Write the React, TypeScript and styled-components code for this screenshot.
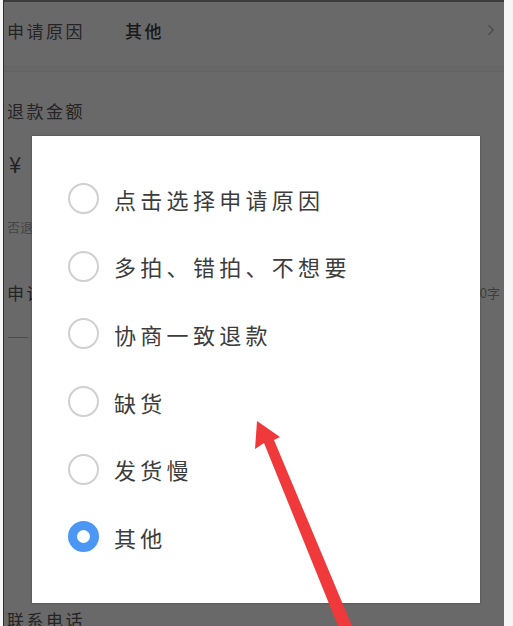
import styled, { createGlobalStyle } from "styled-components";
import { ChevronRight } from "lucide-react";

const reasons = [
  "点击选择申请原因",
  "多拍、错拍、不想要",
  "协商一致退款",
  "缺货",
  "发货慢",
  "其他",
];
const selected = "其他";

const GlobalStyle = createGlobalStyle`
  html, body {
    margin: 0;
    padding: 0;
    background: #fff;
  }
  body {
    font-family: "Noto Sans CJK SC", "Noto Sans", sans-serif;
  }
`;

const Frame = styled.div`
  position: relative;
  width: 513px;
  height: 626px;
  box-sizing: border-box;
  padding: 0 9px 0 3px;
  background: #f6f6f6;
  overflow: hidden;
`;

const Screen = styled.div`
  position: relative;
  height: 100%;
  box-sizing: border-box;
  border-left: 1px solid #2e2e2e;
  border-top: 2px solid #3c3c3c;
  background: #fff;
  overflow: hidden;
`;

const Form = styled.div`
  display: flex;
  flex-direction: column;
  color: #575757;
`;

const Row = styled.div<{ $h: number; $align?: string; $pb?: number }>`
  display: flex;
  flex-shrink: 0;
  align-items: ${(p) => p.$align ?? "center"};
  height: ${(p) => p.$h}px;
  padding: 0 4px ${(p) => p.$pb ?? 0}px 3px;
  box-sizing: border-box;
`;

const Label = styled.span<{ $w?: number; $grow?: boolean }>`
  font-size: 17px;
  letter-spacing: 2.5px;
  width: ${(p) => (p.$w ? `${p.$w}px` : "auto")};
  flex: ${(p) => (p.$grow ? 1 : "none")};
`;

const Value = styled.span`
  font-size: 17px;
  letter-spacing: 2.5px;
  color: #3e3e3e;
  font-weight: 500;
  flex: 1;
`;

const Divider = styled.div`
  height: 4px;
  background: #fbfbfb;
  border-top: 1px solid #f0f0f0;
  border-bottom: 1px solid #f0f0f0;
`;

const Currency = styled.span`
  font-size: 22px;
  color: #555;
  padding-left: 2px;
`;

const Hint = styled.span`
  font-size: 13px;
  color: #a8a8a8;
  flex: 1;
`;

const Side = styled.span`
  font-size: 13px;
  color: #9a9a9a;
`;

const Mask = styled.div`
  position: absolute;
  inset: 0;
  background: rgba(0, 0, 0, 0.59);
  padding: 134px 0 0 28px;
`;

const Dialog = styled.div`
  width: 448px;
  height: 467px;
  box-sizing: border-box;
  padding: 29px 0 32px 36px;
  background: #fff;
  box-shadow: 0 0 2px rgba(0, 0, 0, 0.35);
  display: flex;
  flex-direction: column;
`;

const Option = styled.div`
  display: flex;
  align-items: center;
  gap: 15px;
  height: 67.6px;
`;

const Radio = styled.span<{ $on: boolean }>`
  width: 31px;
  height: 31px;
  box-sizing: border-box;
  border-radius: 50%;
  flex-shrink: 0;
  border: ${(p) => (p.$on ? "9.5px solid #4b97f3" : "2px solid #d0d0d0")};
  background: #fff;
`;

const OptionText = styled.span`
  font-size: 22px;
  font-weight: 400;
  letter-spacing: 4.3px;
  color: #3c3c3c;
`;

const Arrow = styled.svg`
  position: absolute;
  top: 0;
  left: 0;
  pointer-events: none;
`;

export default function App() {
  return (
    <>
      <GlobalStyle />
      <Frame>
        <Screen>
          <Form>
            <Row $h={64} $pb={8}>
              <Label $w={118}>申请原因</Label>
              <Value>其他</Value>
              <ChevronRight size={18} color="#b0b0b0" strokeWidth={1.5} />
            </Row>
            <Divider />
            <Row $h={76}>
              <Label>退款金额</Label>
            </Row>
            <Row $h={30}>
              <Currency>¥</Currency>
            </Row>
            <Row $h={96}>
              <Hint>否退还运费</Hint>
            </Row>
            <Row $h={36}>
              <Label $grow>申请说明</Label>
              <Side>200字</Side>
            </Row>
            <Row $h={50}>
              <Hint>——</Hint>
            </Row>
            <Row $h={272} $align="flex-end">
              <Label>联系电话</Label>
            </Row>
          </Form>
          <Mask>
            <Dialog>
              {reasons.map((r) => (
                <Option key={r}>
                  <Radio $on={r === selected} />
                  <OptionText>{r}</OptionText>
                </Option>
              ))}
            </Dialog>
          </Mask>
        </Screen>
        <Arrow width={513} height={626} viewBox="0 0 513 626">
          <polygon
            points="257,421 280,437 274,440 352,626 338,626 264,443 255,449"
            fill="#f0393a"
          />
        </Arrow>
      </Frame>
    </>
  );
}
